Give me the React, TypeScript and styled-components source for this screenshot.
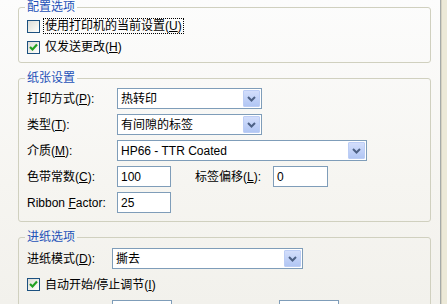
import React from 'react';
import styled, { createGlobalStyle } from 'styled-components';

const GlobalStyle = createGlobalStyle`
  html, body {
    margin: 0;
    padding: 0;
    overflow: hidden;
    background: #ece9d8;
  }
  body {
    font-family: "Liberation Sans", "Noto Sans CJK SC", sans-serif;
    font-size: 12px;
    color: #000;
  }
`;

const Window = styled.div`
  display: flex;
  width: 447px;
  height: 304px;
  background: #ece9d8;
  overflow: hidden;
`;

const TabPage = styled.div`
  width: 441px;
  box-sizing: border-box;
  padding: 0 9px 0 18px;
  display: flex;
  flex-direction: column;
  gap: 8px;
  background: linear-gradient(180deg, #fcfcfc 0%, #f6f5f1 60%, #f2f1ec 100%);
  border-right: 1px solid #a5aaa8;
  box-shadow: 1px 0 0 #d6d2c2;
`;

const Group = styled.fieldset`
  margin: 0;
  padding: 0;
  min-width: 0;
  border: 1px solid #d0d0bf;
  border-radius: 3px;
`;

const Legend = styled.legend`
  margin-left: 6px;
  padding: 0 2px;
  font-size: 12px;
  line-height: 14px;
  color: #1d52b8;
`;

const GroupBody = styled.div<{ $pad: string; $gap?: number }>`
  display: flex;
  flex-direction: column;
  gap: ${p => p.$gap ?? 5}px;
  padding: ${p => p.$pad};
`;

const CheckRow = styled.div<{ $height?: number }>`
  display: flex;
  align-items: center;
  height: ${p => p.$height ?? 20}px;
  gap: 3px;
`;

const CheckBox = styled.span`
  width: 11px;
  height: 11px;
  border: 1px solid #1c5180;
  background: linear-gradient(135deg, #dcdcd7 0%, #f0f0ea 55%, #ffffff 100%);
  display: flex;
  align-items: center;
  justify-content: center;
`;

const CheckLabel = styled.span<{ $focused?: boolean }>`
  line-height: 14px;
  padding: 0 1px;
  border: 1px dotted ${p => (p.$focused ? '#000' : 'transparent')};
`;

const FormRow = styled.div<{ $labelWidth: number }>`
  display: grid;
  grid-template-columns: ${p => p.$labelWidth}px auto auto auto;
  justify-content: start;
  align-items: center;
  height: 21px;
`;

const FieldLabel = styled.span<{ $width?: number; $indent?: number }>`
  line-height: 14px;
  width: ${p => (p.$width ? `${p.$width}px` : 'auto')};
  margin-left: ${p => p.$indent ?? 0}px;
  white-space: nowrap;
`;

const Combo = styled.div<{ $width: number }>`
  width: ${p => p.$width}px;
  height: 21px;
  box-sizing: border-box;
  border: 1px solid #7f9db9;
  background: #fff;
  display: flex;
  align-items: center;
  justify-content: space-between;
  padding: 0 1px 0 3px;
`;

const ComboText = styled.span`
  line-height: 14px;
  white-space: nowrap;
`;

const ComboButton = styled.span`
  width: 15px;
  height: 15px;
  border: 1px solid #bccdf5;
  border-radius: 1px;
  background: linear-gradient(180deg, #d3defb 0%, #c2d2f8 50%, #b1c6f3 100%);
  display: flex;
  align-items: center;
  justify-content: center;
`;

const TextBox = styled.div<{ $width: number }>`
  width: ${p => p.$width}px;
  height: 21px;
  box-sizing: border-box;
  border: 1px solid #7f9db9;
  background: #fff;
  padding: 0 3px;
  display: flex;
  align-items: center;
  line-height: 14px;
`;

const Check = () => (
  <svg width="9" height="9" viewBox="0 0 9 9">
    <polyline points="1,4 3.5,6.5 8,1.5" fill="none" stroke="#21a121" strokeWidth="2.2" />
  </svg>
);

const Chevron = () => (
  <svg width="9" height="6" viewBox="0 0 9 6">
    <polyline points="1,1 4.5,4.5 8,1" fill="none" stroke="#4d6185" strokeWidth="2" />
  </svg>
);

const Select: React.FC<{ width: number; value: string }> = ({ width, value }) => (
  <Combo $width={width}>
    <ComboText>{value}</ComboText>
    <ComboButton>
      <Chevron />
    </ComboButton>
  </Combo>
);

const App: React.FC = () => {
  return (
    <>
      <GlobalStyle />
      <Window>
        <TabPage>
          <Group>
            <Legend>配置选项</Legend>
            <GroupBody $pad="2px 8px 5px 8px" $gap={1}>
              <CheckRow>
                <CheckBox />
                <CheckLabel $focused>
                  使用打印机的当前设置(<u>U</u>)
                </CheckLabel>
              </CheckRow>
              <CheckRow>
                <CheckBox>
                  <Check />
                </CheckBox>
                <CheckLabel>
                  仅发送更改(<u>H</u>)
                </CheckLabel>
              </CheckRow>
            </GroupBody>
          </Group>

          <Group>
            <Legend>纸张设置</Legend>
            <GroupBody $pad="3px 8px 8px 8px">
              <FormRow $labelWidth={90}>
                <FieldLabel>
                  打印方式(<u>P</u>):
                </FieldLabel>
                <Select width={145} value="热转印" />
              </FormRow>
              <FormRow $labelWidth={90}>
                <FieldLabel>
                  类型(<u>T</u>):
                </FieldLabel>
                <Select width={145} value="有间隙的标签" />
              </FormRow>
              <FormRow $labelWidth={90}>
                <FieldLabel>
                  介质(<u>M</u>):
                </FieldLabel>
                <Select width={250} value="HP66 - TTR Coated" />
              </FormRow>
              <FormRow $labelWidth={90}>
                <FieldLabel>
                  色带常数(<u>C</u>):
                </FieldLabel>
                <TextBox $width={54}>100</TextBox>
                <FieldLabel $width={78} $indent={24}>
                  标签偏移(<u>L</u>):
                </FieldLabel>
                <TextBox $width={55}>0</TextBox>
              </FormRow>
              <FormRow $labelWidth={90}>
                <FieldLabel>
                  Ribbon <u>F</u>actor:
                </FieldLabel>
                <TextBox $width={54}>25</TextBox>
              </FormRow>
            </GroupBody>
          </Group>

          <Group>
            <Legend>进纸选项</Legend>
            <GroupBody $pad="4px 8px 8px 8px" $gap={6}>
              <FormRow $labelWidth={85}>
                <FieldLabel>
                  进纸模式(<u>D</u>):
                </FieldLabel>
                <Select width={191} value="撕去" />
              </FormRow>
              <CheckRow $height={19}>
                <CheckBox>
                  <Check />
                </CheckBox>
                <CheckLabel>
                  自动开始/停止调节(<u>I</u>)
                </CheckLabel>
              </CheckRow>
              <FormRow $labelWidth={85}>
                <FieldLabel />
                <TextBox $width={60} />
                <FieldLabel $width={107} />
                <TextBox $width={60} />
              </FormRow>
            </GroupBody>
          </Group>
        </TabPage>
      </Window>
    </>
  );
};

export default App;
